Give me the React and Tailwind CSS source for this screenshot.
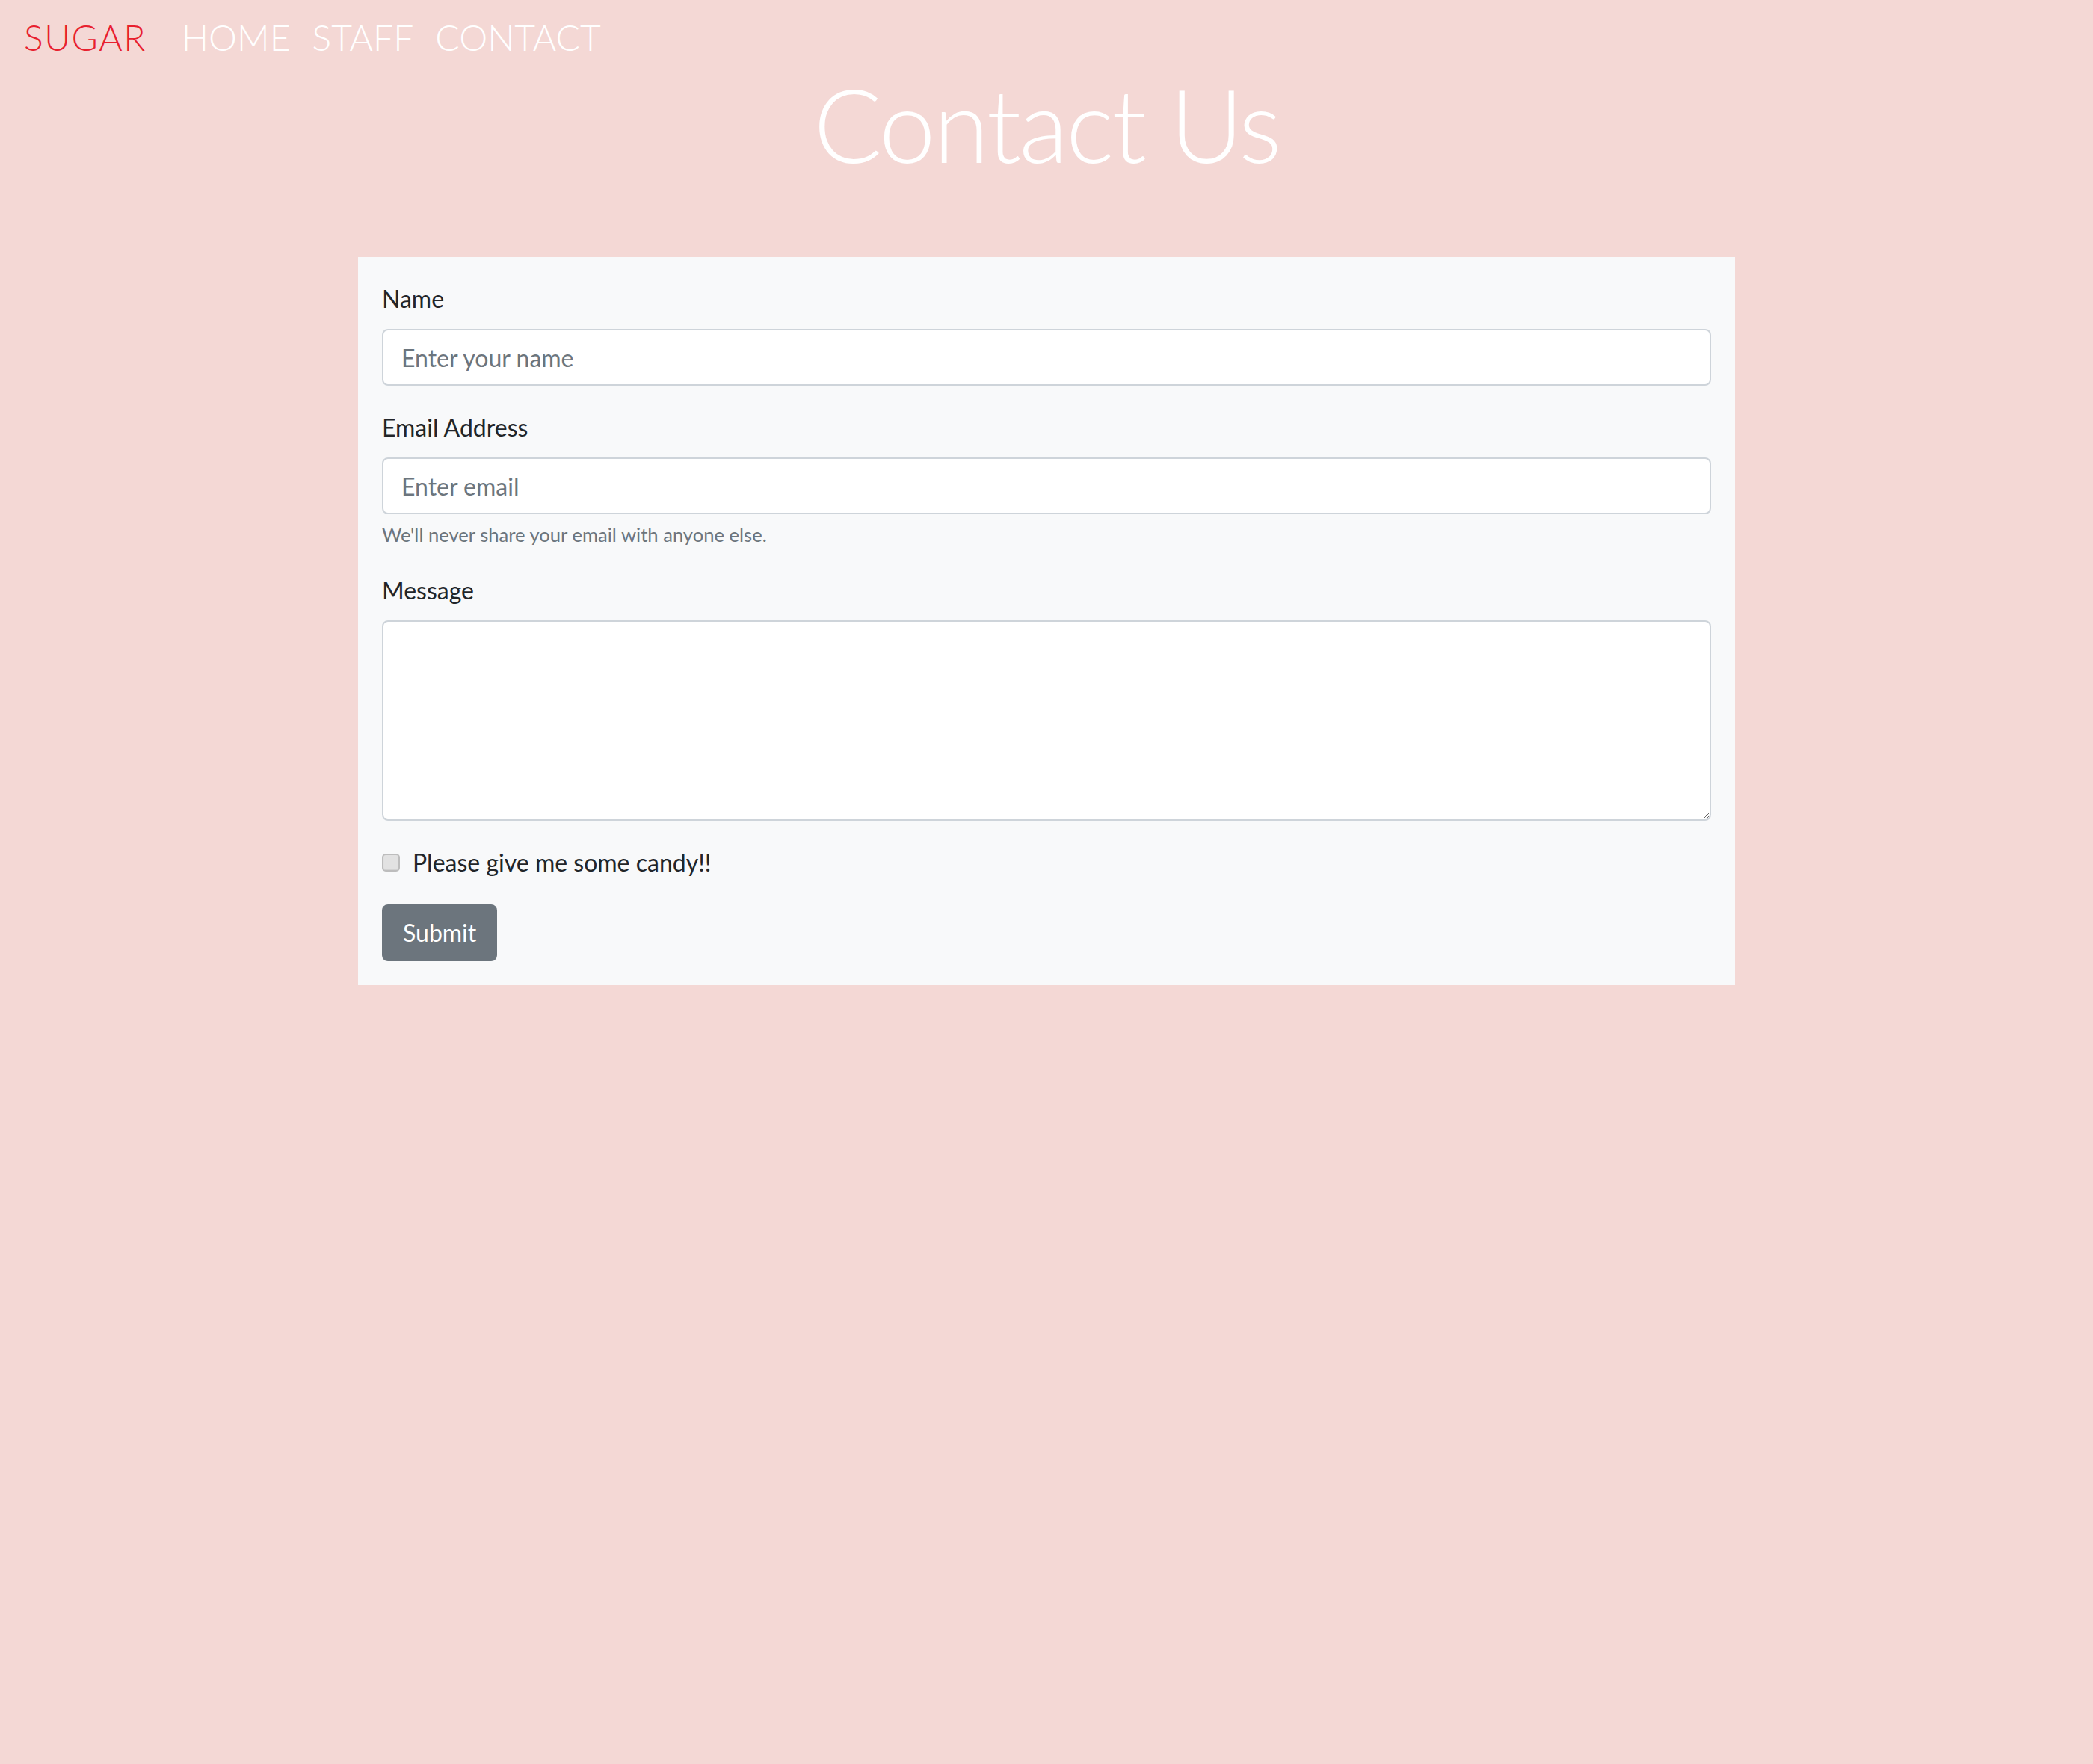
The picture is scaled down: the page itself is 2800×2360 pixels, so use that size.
export default function App() {
  return (
    <div className="min-h-[2360px] w-full bg-[#f4d8d5] font-['Lato','Liberation_Sans',sans-serif]">
      <nav className="flex h-[100px] items-center px-[32px] text-[48px] font-light leading-none">
        <a href="#" className="mr-[47px] tracking-[1.5px] text-[#e8202e]">SUGAR</a>
        <div className="flex gap-[29px] text-white">
          <a href="#">HOME</a>
          <a href="#">STAFF</a>
          <a href="#">CONTACT</a>
        </div>
      </nav>

      <h1 className="text-center text-[136px] font-light leading-[132px] tracking-[-3px] text-white">
        Contact Us
      </h1>

      <div className="mx-auto mt-[112px] w-[1842px] bg-[#f8f9fa] p-[32px] text-[32px] leading-[48px] text-[#212529]">
        <form>
          <div className="mb-[32px]">
            <label className="mb-[16px] block">Name</label>
            <input
              type="text"
              placeholder="Enter your name"
              className="block h-[76px] w-full rounded-[8px] border-2 border-[#ced4da] bg-white px-[24px] text-[32px] placeholder:text-[#6c757d] outline-none"
            />
          </div>

          <div className="mb-[32px]">
            <label className="mb-[16px] block">Email Address</label>
            <input
              type="email"
              placeholder="Enter email"
              className="block h-[76px] w-full rounded-[8px] border-2 border-[#ced4da] bg-white px-[24px] text-[32px] placeholder:text-[#6c757d] outline-none"
            />
            <small className="mt-[8px] block text-[25.6px] leading-[38px] text-[#6c757d]">
              We'll never share your email with anyone else.
            </small>
          </div>

          <div className="mb-[32px]">
            <label className="mb-[16px] block">Message</label>
            <textarea className="block h-[268px] w-full rounded-[8px] border-2 border-[#ced4da] bg-white px-[24px] py-[12px] text-[32px] outline-none" />
          </div>

          <div className="mb-[32px] flex items-center">
            <input
              type="checkbox"
              className="h-[24px] w-[24px] appearance-none rounded-[5px] border-2 border-[#bdbdbd] bg-[#e2e2e2] shadow-[inset_0_-1px_1px_rgba(0,0,0,0.08)]"
            />
            <label className="ml-[17px]">Please give me some candy!!</label>
          </div>

          <button
            type="submit"
            className="h-[76px] rounded-[8px] bg-[#6c757d] px-[28px] text-[32px] text-white"
          >
            Submit
          </button>
        </form>
      </div>
    </div>
  );
}
